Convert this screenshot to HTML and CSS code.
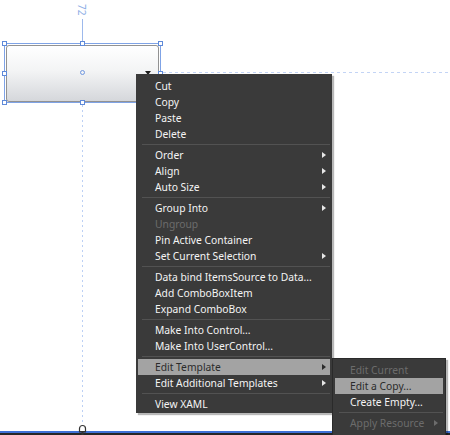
FILE: index.html
```html
<!DOCTYPE html>
<html>
<head>
<meta charset="utf-8">
<link rel="stylesheet" href="styles.css">
</head>
<body>
<div class="canvas">
  <div class="dim-label">72</div>
  <div class="dim-line"></div>
  <div class="hguide"></div>
  <div class="vguide"></div>

  <div class="combo">
    <span class="center-dot"></span>
    <span class="drop-arrow"></span>
  </div>
  <div class="selection">
    <span class="handle h-tl"></span>
    <span class="handle h-tc"></span>
    <span class="handle h-tr"></span>
    <span class="handle h-ml"></span>
    <span class="handle h-mr"></span>
    <span class="handle h-bl"></span>
    <span class="handle h-bc"></span>
    <span class="handle h-br"></span>
  </div>

  <div class="bottombar"></div>
  <svg class="anchor" width="9" height="12" viewBox="0 0 9 12">
    <path d="M1.5 7.5 V4.5 A3 3 0 0 1 7.5 4.5 V7.5 Z" fill="#fff" stroke="#333" stroke-width="1.2"/>
    <rect x="1" y="7" width="7" height="1.5" fill="#333"/>
    <rect x="3.5" y="8" width="2" height="4" fill="#333"/>
  </svg>

  <div class="menu">
    <div class="item">Cut</div>
    <div class="item">Copy</div>
    <div class="item">Paste</div>
    <div class="item">Delete</div>
    <div class="sep"></div>
    <div class="item">Order<span class="arrow"></span></div>
    <div class="item">Align<span class="arrow"></span></div>
    <div class="item">Auto Size<span class="arrow"></span></div>
    <div class="sep"></div>
    <div class="item">Group Into<span class="arrow"></span></div>
    <div class="item disabled">Ungroup</div>
    <div class="item">Pin Active Container</div>
    <div class="item">Set Current Selection<span class="arrow"></span></div>
    <div class="sep"></div>
    <div class="item">Data bind ItemsSource to Data...</div>
    <div class="item">Add ComboBoxItem</div>
    <div class="item">Expand ComboBox</div>
    <div class="sep"></div>
    <div class="item">Make Into Control...</div>
    <div class="item">Make Into UserControl...</div>
    <div class="sep"></div>
    <div class="item active">Edit Template<span class="arrow"></span></div>
    <div class="item">Edit Additional Templates<span class="arrow"></span></div>
    <div class="sep"></div>
    <div class="item">View XAML</div>
  </div>

  <div class="menu submenu">
    <div class="item disabled">Edit Current</div>
    <div class="item active">Edit a Copy...</div>
    <div class="item">Create Empty...</div>
    <div class="sep"></div>
    <div class="item disabled">Apply Resource<span class="arrow"></span></div>
  </div>
</div>
</body>
</html>
```
FILE: styles.css
```css
html, body {
  margin: 0;
  padding: 0;
  background: #ffffff;
}

.canvas {
  position: relative;
  width: 450px;
  height: 435px;
  overflow: hidden;
  background: #ffffff;
  font-family: "Noto Sans", "DejaVu Sans", sans-serif;
}

.dim-label {
  position: absolute;
  left: 76px;
  top: 4px;
  writing-mode: vertical-rl;
  font-size: 10px;
  line-height: 12px;
  color: #8eaee6;
}

.dim-line {
  position: absolute;
  left: 82px;
  top: 19px;
  width: 1px;
  height: 24px;
  background: #9db9ec;
}

.hguide {
  position: absolute;
  left: 163px;
  top: 72px;
  width: 287px;
  height: 1px;
  background: repeating-linear-gradient(to right, #c3d4f5 0 3px, transparent 3px 6px);
}

.vguide {
  position: absolute;
  left: 82px;
  top: 105px;
  width: 1px;
  height: 320px;
  background: repeating-linear-gradient(to bottom, #bcd0f4 0 2px, transparent 2px 5px);
}

.combo {
  position: absolute;
  left: 6px;
  top: 45px;
  width: 153px;
  height: 57px;
  box-sizing: border-box;
  border: 1px solid #929292;
  border-radius: 3px;
  background: linear-gradient(to bottom, #ffffff 0%, #f3f4f5 45%, #d5d7db 100%);
}

.center-dot {
  position: absolute;
  left: 73px;
  top: 24px;
  width: 5px;
  height: 5px;
  box-sizing: border-box;
  border: 1px solid #6f97e0;
  border-radius: 50%;
}

.drop-arrow {
  position: absolute;
  left: 138px;
  top: 25px;
  width: 0;
  height: 0;
  border-left: 3px solid transparent;
  border-right: 3px solid transparent;
  border-top: 4px solid #1e1e1e;
}

.selection {
  position: absolute;
  left: 4px;
  top: 43px;
  width: 157px;
  height: 60px;
  box-sizing: border-box;
  border: 1px solid #7fa3e6;
}

.handle {
  position: absolute;
  width: 5px;
  height: 5px;
  box-sizing: border-box;
  border: 1px solid #5f8ad9;
  background: #ffffff;
}

.h-tl { left: -3px; top: -3px; }
.h-tc { left: 75px; top: -3px; }
.h-tr { right: -3px; top: -3px; }
.h-ml { left: -3px; top: 27px; }
.h-mr { right: -3px; top: 27px; }
.h-bl { left: -3px; bottom: -3px; }
.h-bc { left: 75px; bottom: -3px; }
.h-br { right: -3px; bottom: -3px; }

.bottombar {
  position: absolute;
  left: 0;
  top: 431px;
  width: 450px;
  height: 4px;
  box-sizing: border-box;
  border-top: 2px solid #3f70d6;
  background: #262626;
}

.anchor {
  position: absolute;
  left: 78px;
  top: 424px;
}

.menu {
  position: absolute;
  left: 136px;
  top: 74px;
  width: 196px;
  box-sizing: border-box;
  padding: 4px 2px 1px 2px;
  background: #3a3a3a;
  box-shadow: 2px 2px 1px rgba(0, 0, 0, 0.28);
  font-size: 10.3px;
  color: #f4f4f4;
}

.item {
  display: flex;
  align-items: center;
  height: 16px;
  line-height: 16px;
  padding: 0 4px 0 17px;
  white-space: nowrap;
}

.item.disabled {
  color: #6c6c6c;
}

.item.active {
  background: #a3a3a3;
  color: #2b2b2b;
}

.arrow {
  margin-left: auto;
  width: 0;
  height: 0;
  border-top: 3.5px solid transparent;
  border-bottom: 3.5px solid transparent;
  border-left: 4px solid #e6e6e6;
}

.item.active .arrow {
  border-left-color: #2b2b2b;
}

.item.disabled .arrow {
  border-left-color: #6c6c6c;
}

.sep {
  height: 1px;
  margin: 2px 0 2px 4px;
  background: #525252;
}

.submenu {
  left: 332px;
  top: 358px;
  width: 114px;
  padding: 3px 2px 8px 2px;
  border: 1px solid #2a2a2a;
  z-index: 2;
}

.submenu .item {
  padding-left: 15px;
  padding-right: 5px;
}
```
